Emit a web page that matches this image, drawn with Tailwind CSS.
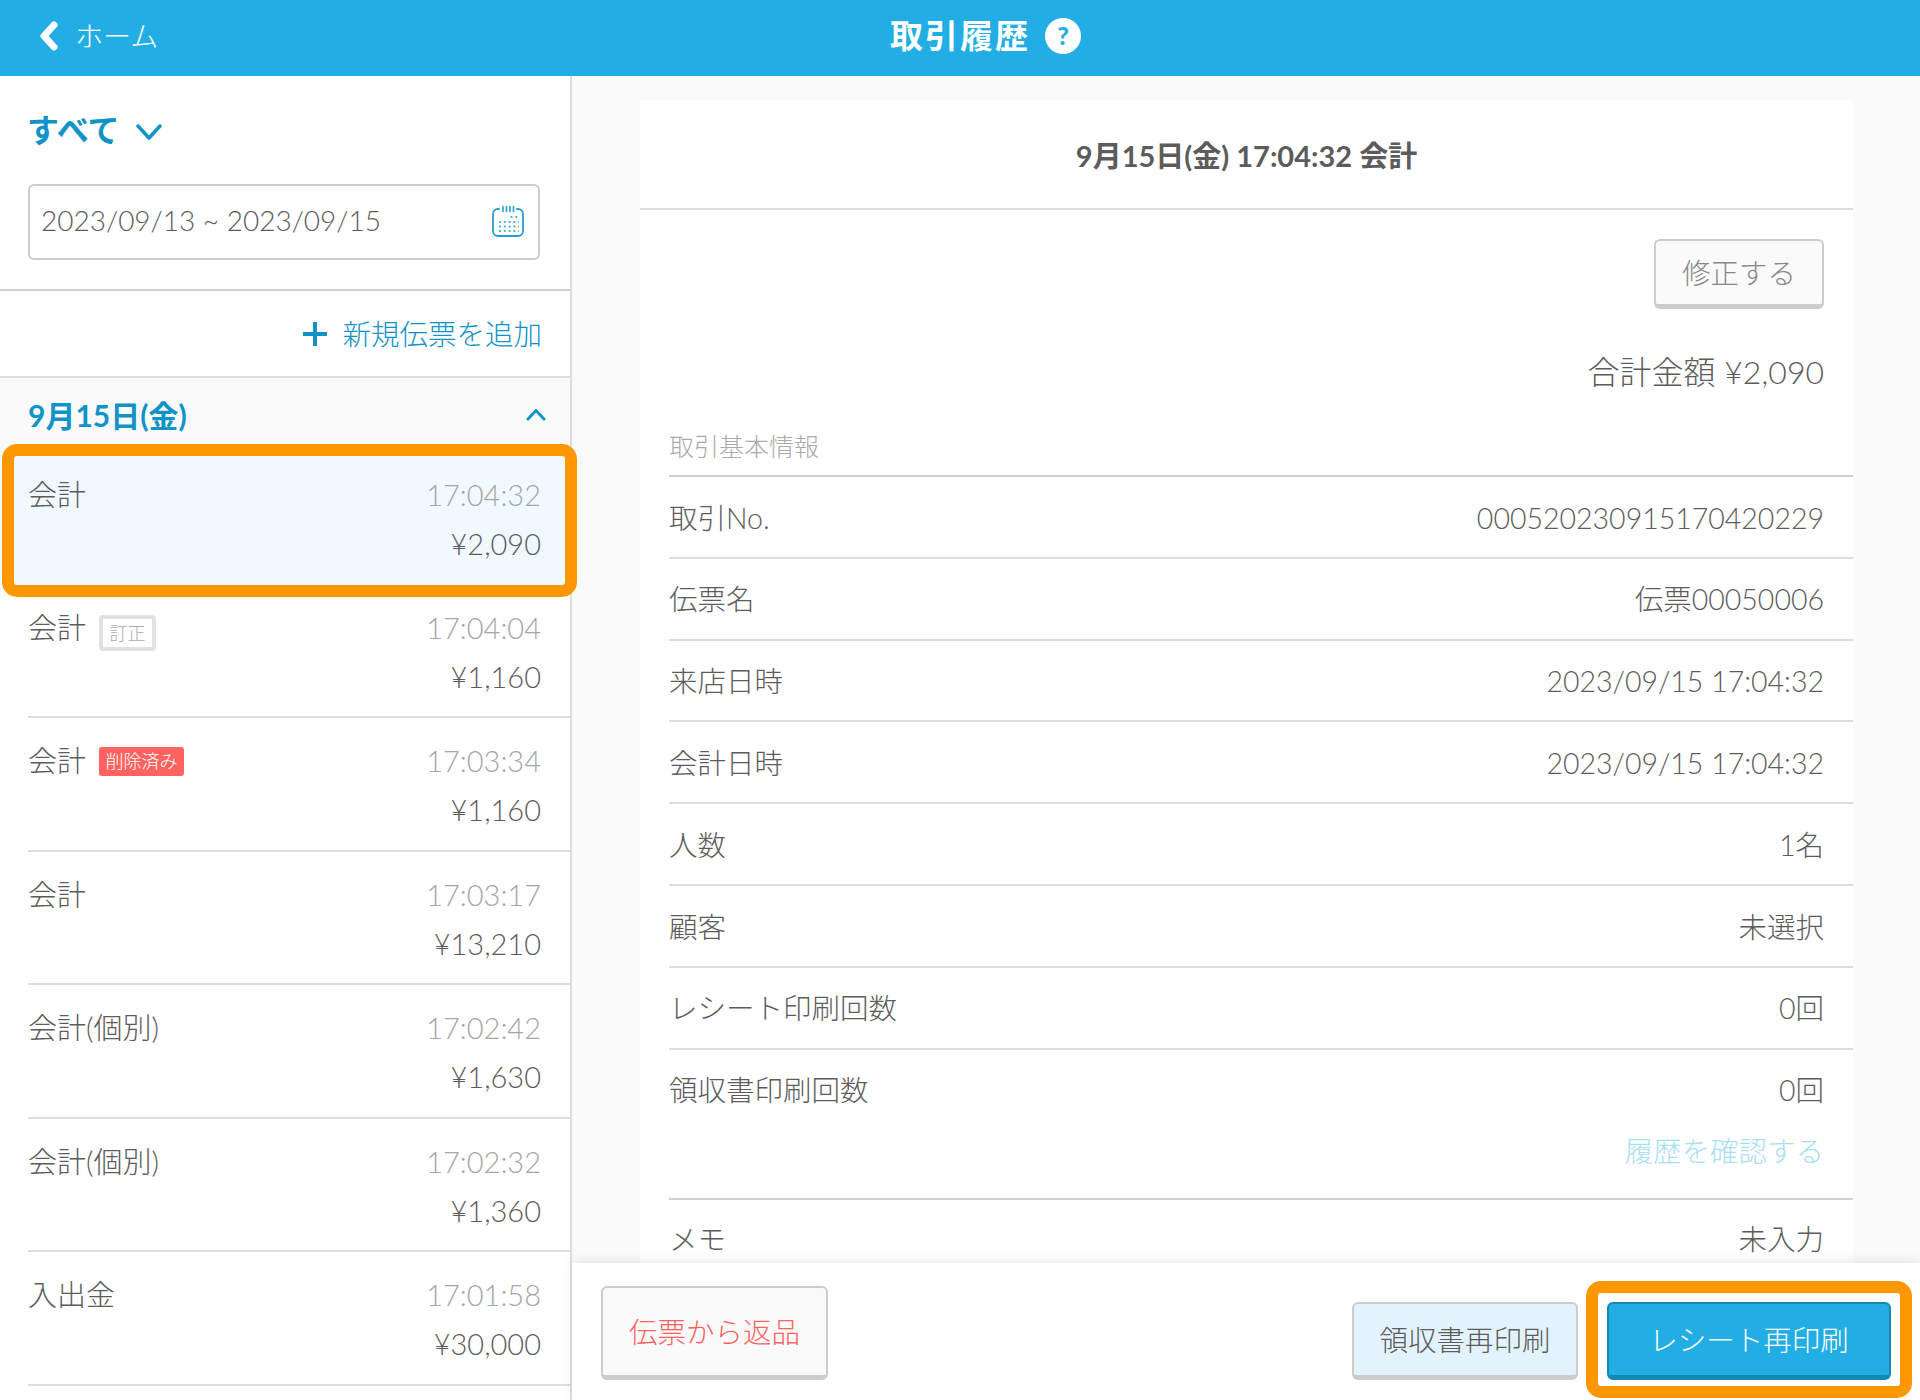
<!DOCTYPE html>
<html lang="ja">
<head>
    <meta charset="UTF-8">
    <title>取引履歴</title>
    <script src="https://cdn.jsdelivr.net/npm/@tailwindcss/browser@4"></script>
</head>
<body class="w-[1920px] h-[1400px] overflow-hidden flex flex-col bg-white text-[#5c5c5c] font-light font-['Lato','Noto_Sans_CJK_JP',sans-serif]">
    <!-- Header -->
    <header class="h-[76px] shrink-0 bg-[#22aee4] text-white flex items-center pl-[40px] pb-[5px]">
        <div class="w-[850px] flex items-center gap-[17px]">
            <svg class="w-[18px] h-[30px]" viewBox="0 0 18 30" fill="none" stroke="currentColor" stroke-width="7" stroke-linecap="round" stroke-linejoin="round"><path d="M14 4 4 15l10 11"/></svg>
            <span class="text-[28px] leading-none">ホーム</span>
        </div>
        <h1 class="text-[33px] font-bold tracking-[2px] leading-none">取引履歴</h1>
        <span class="ml-[15px] w-[36px] h-[36px] rounded-full bg-white text-[#22aee4] flex items-center justify-center text-[25px] font-black leading-none">?</span>
    </header>

    <div class="flex-1 flex min-h-0">
        <!-- Sidebar -->
        <aside class="w-[572px] shrink-0 border-r-2 border-[#ddd] bg-white relative text-[29px]">
            <div class="h-[215px] border-b-2 border-[#d0d0d0] pl-[27px] pr-[28px] pt-[34px]">
                <div class="h-[40px] flex items-center gap-[17px] text-[#1193c7]">
                    <span class="text-[32px] font-bold leading-none">すべて</span>
                    <svg class="w-[26px] h-[16px] mt-[4px]" viewBox="0 0 26 16" fill="none" stroke="currentColor" stroke-width="3.5" stroke-linecap="round" stroke-linejoin="round"><path d="M2 2l11 12L24 2"/></svg>
                </div>
                <div class="ml-[1px] mt-[34px] h-[76px] w-[512px] border-2 border-[#ccc] rounded-[6px] flex items-center justify-between pl-[11px] pr-[14px]">
                    <span class="text-[28px] leading-none -mt-[5px]">2023/09/13 ~ 2023/09/15</span>
                    <svg class="w-[32px] h-[32px] -mt-[2px]" viewBox="0 0 32 32" fill="none" stroke="#22a0d4">
                        <path stroke-width="1.800" stroke-linecap="round" d="M7 4H6a5 5 0 0 0-5 5v17a5 5 0 0 0 5 5h20a5 5 0 0 0 5-5V9a5 5 0 0 0-5-5h-1"/>
                        <path stroke-width="1.600" stroke-linecap="round" d="M11 1.500v5M14.500 1.500v5M18 1.500v5M21.500 1.500v5"/>
                        <path stroke-width="2" stroke-dasharray="2 2.800" opacity="0.8" d="M18.500 12h9M7 17h20M7 21.500h20M7 26h20"/>
                    </svg>
                </div>
            </div>
            <div class="h-[87px] border-b-2 border-[#ddd] flex items-center justify-end gap-[14px] pr-[28px] text-[#1193c7]">
                <svg class="w-[26px] h-[26px]" viewBox="0 0 26 26" fill="none" stroke="currentColor" stroke-width="4"><path d="M13 1v24M1 13h24"/></svg>
                <span class="text-[28.500px] leading-none mt-[2px]">新規伝票を追加</span>
            </div>
            <div class="h-[73px] bg-[#fafafa] flex items-center justify-between pl-[28px] pr-[24px] text-[#1193c7]">
                <span class="text-[30px] font-bold leading-none">9月15日(金)</span>
                <svg class="w-[20px] h-[13px]" viewBox="0 0 20 13" fill="none" stroke="currentColor" stroke-width="3" stroke-linecap="round" stroke-linejoin="round"><path d="M2 11l8-8.500L18 11"/></svg>
            </div>

            <!-- Selected row -->
            <div class="relative h-[133.500px] bg-[#f0f9ff] pl-[28px] pr-[29px] pt-[26px] leading-[36px]">
                <div class="h-[36px] flex justify-between"><span>会計</span><span class="text-[#a6a6a6]">17:04:32</span></div>
                <div class="mt-[13px] text-right">¥2,090</div>
                <div class="absolute left-[2px] w-[575px] -top-[7px] -bottom-[12px] border-[12px] border-[#ff9800] rounded-[15px] z-10"></div>
            </div>

            <div class="ml-[28px] h-[133.500px] border-b-2 border-[#ddd] pr-[29px] pt-[25px] leading-[36px]">
                <div class="h-[36px] flex items-center"><span>会計</span><span class="ml-[13px] w-[57px] h-[36px] border-[4px] border-[#e2e2e2] rounded-[4px] text-[18px] leading-none text-[#aaa] flex items-center justify-center mt-[10px]">訂正</span><span class="ml-auto text-[#a6a6a6]">17:04:04</span></div>
                <div class="mt-[13px] text-right">¥1,160</div>
            </div>
            <div class="ml-[28px] h-[133.500px] border-b-2 border-[#ddd] pr-[29px] pt-[25px] leading-[36px]">
                <div class="h-[36px] flex items-center"><span>会計</span><span class="ml-[13px] w-[85px] h-[29px] bg-[#ff6361] rounded-[3px] text-[18px] leading-none text-white flex items-center justify-center">削除済み</span><span class="ml-auto text-[#a6a6a6]">17:03:34</span></div>
                <div class="mt-[13px] text-right">¥1,160</div>
            </div>
            <div class="ml-[28px] h-[133.500px] border-b-2 border-[#ddd] pr-[29px] pt-[25px] leading-[36px]">
                <div class="h-[36px] flex justify-between"><span>会計</span><span class="text-[#a6a6a6]">17:03:17</span></div>
                <div class="mt-[13px] text-right">¥13,210</div>
            </div>
            <div class="ml-[28px] h-[133.500px] border-b-2 border-[#ddd] pr-[29px] pt-[25px] leading-[36px]">
                <div class="h-[36px] flex justify-between"><span>会計(個別)</span><span class="text-[#a6a6a6]">17:02:42</span></div>
                <div class="mt-[13px] text-right">¥1,630</div>
            </div>
            <div class="ml-[28px] h-[133.500px] border-b-2 border-[#ddd] pr-[29px] pt-[25px] leading-[36px]">
                <div class="h-[36px] flex justify-between"><span>会計(個別)</span><span class="text-[#a6a6a6]">17:02:32</span></div>
                <div class="mt-[13px] text-right">¥1,360</div>
            </div>
            <div class="ml-[28px] h-[133.500px] border-b-2 border-[#ddd] pr-[29px] pt-[25px] leading-[36px]">
                <div class="h-[36px] flex justify-between"><span>入出金</span><span class="text-[#a6a6a6]">17:01:58</span></div>
                <div class="mt-[13px] text-right">¥30,000</div>
            </div>
        </aside>

        <!-- Detail -->
        <main class="flex-1 min-w-0 bg-[#fafafa] flex flex-col">
            <div class="flex-1 min-h-0 overflow-hidden pl-[68px] pr-[67px] pt-[24px]">
                <div class="bg-white text-[28.500px]">
                    <div class="h-[110px] border-b-2 border-[#ddd] flex items-center justify-center text-[29px] font-bold leading-none pt-[2px]">9月15日(金) 17:04:32 会計</div>
                    <div class="pt-[29px] pr-[29px] flex flex-col items-end">
                        <div class="w-[170px] h-[70px] pt-[2px] bg-[#fafafa] border-2 border-b-[5px] border-[#ccc] rounded-[6px] flex items-center justify-center text-[#888] leading-none">修正する</div>
                        <div class="mt-[43px] text-[32px] leading-[40px]">合計金額 ¥2,090</div>
                    </div>
                    <div class="ml-[29px] mt-[38px] border-b-2 border-[#d0d0d0] pb-[13px] text-[25px] leading-[32px] text-[#aaa]">取引基本情報</div>
                    <div class="ml-[29px] h-[81.800px] pt-[2px] border-b-2 border-[#ddd] pr-[29px] flex items-center justify-between"><span>取引No.</span><span>000520230915170420229</span></div>
                    <div class="ml-[29px] h-[81.800px] pt-[2px] border-b-2 border-[#ddd] pr-[29px] flex items-center justify-between"><span>伝票名</span><span>伝票00050006</span></div>
                    <div class="ml-[29px] h-[81.800px] pt-[2px] border-b-2 border-[#ddd] pr-[29px] flex items-center justify-between"><span>来店日時</span><span>2023/09/15 17:04:32</span></div>
                    <div class="ml-[29px] h-[81.800px] pt-[2px] border-b-2 border-[#ddd] pr-[29px] flex items-center justify-between"><span>会計日時</span><span>2023/09/15 17:04:32</span></div>
                    <div class="ml-[29px] h-[81.800px] pt-[2px] border-b-2 border-[#ddd] pr-[29px] flex items-center justify-between"><span>人数</span><span>1名</span></div>
                    <div class="ml-[29px] h-[81.800px] pt-[2px] border-b-2 border-[#ddd] pr-[29px] flex items-center justify-between"><span>顧客</span><span>未選択</span></div>
                    <div class="ml-[29px] h-[81.800px] pt-[2px] border-b-2 border-[#ddd] pr-[29px] flex items-center justify-between"><span>レシート印刷回数</span><span>0回</span></div>
                    <div class="ml-[29px] h-[150px] border-b-2 border-[#d0d0d0] pr-[29px]">
                        <div class="h-[81px] flex items-center justify-between"><span>領収書印刷回数</span><span>0回</span></div>
                        <div class="text-right text-[#a9dff3] leading-[40px]">履歴を確認する</div>
                    </div>
                    <div class="ml-[29px] h-[79px] pr-[29px] flex items-center justify-between"><span>メモ</span><span>未入力</span></div>
                </div>
            </div>

            <footer class="relative h-[137px] shrink-0 bg-white shadow-[0_-3px_10px_rgba(0,0,0,0.08)] pl-[29px] pr-[29px] pt-[23px] flex items-start text-[28.500px] leading-none">
                <div class="w-[227px] h-[94px] pt-[2px] bg-[#fafafa] border-2 border-b-[5px] border-[#ccc] rounded-[6px] flex items-center justify-center text-[#ff6361]">伝票から返品</div>
                <div class="ml-auto mt-[16px] w-[226px] h-[78px] pt-[2px] bg-[#e3f3fd] border-2 border-b-[5px] border-[#ccc] rounded-[6px] flex items-center justify-center">領収書再印刷</div>
                <div class="relative ml-[29px] mt-[16px] w-[284px] h-[78px] pt-[2px] bg-[#22aee4] border-2 border-b-[5px] border-[#1488b6] rounded-[6px] flex items-center justify-center text-white">
                    レシート再印刷
                    <div class="absolute -left-[23px] -right-[23px] -top-[23px] -bottom-[23px] border-[12px] border-[#ff9800] rounded-[15px]"></div>
                </div>
            </footer>
        </main>
    </div>
</body>
</html>
